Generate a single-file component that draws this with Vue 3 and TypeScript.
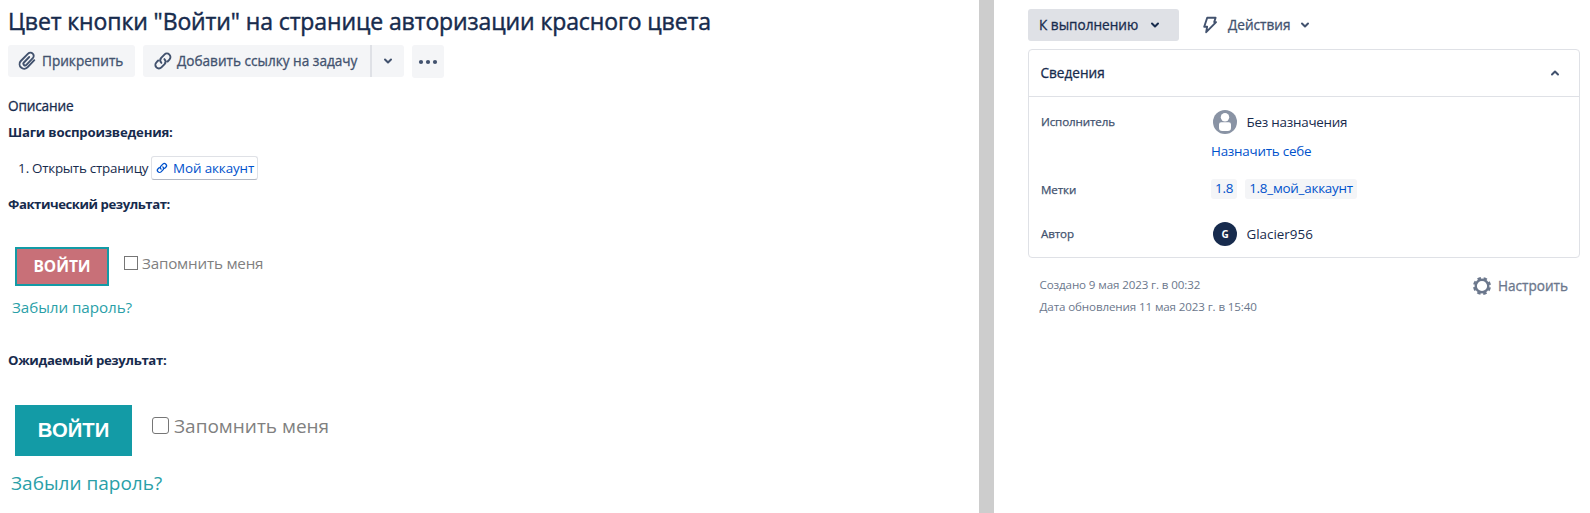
<script setup lang="ts">
interface Shot {
  kind: string
  button: string
  remember: string
  forgot: string
}

const tags: string[] = ['1.8', '1.8_мой_аккаунт']
const actual: Shot = { kind: 'actual', button: 'ВОЙТИ', remember: 'Запомнить меня', forgot: 'Забыли пароль?' }
const expected: Shot = { ...actual, kind: 'expected' }
</script>

<template>
  <div class="page">
    <main class="issue">
      <h1><span class="t title">Цвет кнопки "Войти" на странице авторизации красного цвета</span></h1>
      <div class="toolbar">
        <button class="btn attach">
          <svg width="20" height="20" viewBox="0 0 20 20" fill="none" stroke="currentColor" stroke-width="1.9" stroke-linecap="round" stroke-linejoin="round"><path d="M17.3 9.2l-6.6 7a4.6 4.6 0 0 1-6.9-6.2l7.3-7.3a3.2 3.2 0 0 1 4.7 4.5l-6.4 6.7a1.7 1.7 0 0 1-2.5-2.4l5.3-5.5" /></svg>
          <span class="t">Прикрепить</span>
        </button>
        <div class="split">
          <button class="btn link">
            <svg width="20" height="20" viewBox="0 0 20 20" fill="none" stroke="currentColor" stroke-width="1.9" stroke-linecap="round"><path d="M8.4 11.9a3.7 3.7 0 0 1-.2-5l3.2-3.3a3.5 3.5 0 0 1 5 5l-1.8 1.9M11.4 8.1a3.7 3.7 0 0 1 .2 5l-3.2 3.3a3.5 3.5 0 0 1-5-5l1.8-1.9" /></svg>
            <span class="t">Добавить ссылку на задачу</span>
          </button>
          <button class="btn caret"><svg width="10" height="8" viewBox="0 0 10 8" fill="none" stroke="currentColor" stroke-width="2" stroke-linecap="round" stroke-linejoin="round"><path d="M2 2.5l3 3 3-3" /></svg></button>
        </div>
        <button class="btn more"><svg width="20" height="6" viewBox="0 0 20 6" fill="currentColor"><circle cx="3" cy="3" r="2.1" /><circle cx="10" cy="3" r="2.1" /><circle cx="17" cy="3" r="2.1" /></svg></button>
      </div>

      <p class="row desc"><span class="t">Описание</span></p>
      <p class="row steps"><b class="t heading-steps">Шаги воспроизведения:</b></p>
      <div class="step">
        <span class="num">1.</span>
        <span class="t open">Открыть страницу</span>
        <a class="chip">
          <svg width="12" height="12" viewBox="0 0 20 20" fill="none" stroke="currentColor" stroke-width="2.2" stroke-linecap="round"><path d="M8.4 11.9a3.7 3.7 0 0 1-.2-5l3.2-3.3a3.5 3.5 0 0 1 5 5l-1.8 1.9M11.4 8.1a3.7 3.7 0 0 1 .2 5l-3.2 3.3a3.5 3.5 0 0 1-5-5l1.8-1.9" /></svg>
          <span class="t">Мой аккаунт</span>
        </a>
      </div>
      <p class="row"><b class="t heading-actual">Фактический результат:</b></p>

      <section v-for="shot in [actual, expected]" :key="shot.kind" :class="shot.kind">
        <p v-if="shot.kind === 'expected'" class="row"><b class="t heading-expected">Ожидаемый результат:</b></p>
        <div class="login">
          <div class="enter"><span class="t enter-text">{{ shot.button }}</span></div>
          <i class="box"></i>
          <span class="t remember">{{ shot.remember }}</span>
        </div>
        <div class="forgot"><span class="t">{{ shot.forgot }}</span></div>
      </section>
    </main>

    <div class="divider"></div>

    <aside class="side">
      <div class="status">
        <button class="state">
          <span class="t">К выполнению</span>
          <svg width="10" height="8" viewBox="0 0 10 8" fill="none" stroke="currentColor" stroke-width="2" stroke-linecap="round" stroke-linejoin="round"><path d="M2 2.5l3 3 3-3" /></svg>
        </button>
        <div class="actions">
          <svg class="bolt" width="16" height="18" viewBox="0 0 16 18" fill="none" stroke="currentColor" stroke-width="1.9" stroke-linejoin="round"><path d="M5.2 1.8h8.4l-1.4 4.3h1.9L4.2 16.2l.9-5.4H2.2z" /></svg>
          <span class="t act">Действия</span>
          <svg width="10" height="8" viewBox="0 0 10 8" fill="none" stroke="currentColor" stroke-width="2" stroke-linecap="round" stroke-linejoin="round"><path d="M2 2.5l3 3 3-3" /></svg>
        </div>
      </div>

      <div class="card">
        <header>
          <span class="t">Сведения</span>
          <svg width="10" height="8" viewBox="0 0 10 8" fill="none" stroke="#42526e" stroke-width="2" stroke-linecap="round" stroke-linejoin="round"><path d="M2 5.5l3-3 3 3" /></svg>
        </header>
        <dl>
          <dt><span class="t">Исполнитель</span></dt>
          <dd class="person">
            <svg width="24" height="24" viewBox="0 0 24 24"><circle cx="12" cy="12" r="12" fill="#8993a4" /><circle cx="12" cy="7.2" r="4.2" fill="#fff" /><path d="M6 14.4a2.2 2.2 0 0 1 2.2-2.2h7.6a2.2 2.2 0 0 1 2.2 2.2v3.4a3.2 3.2 0 0 1-3.2 3.2H9.2a3.2 3.2 0 0 1-3.2-3.2z" fill="#fff" /></svg>
            <span class="t name">Без назначения</span>
          </dd>
          <dd class="self"><a class="t name">Назначить себе</a></dd>
          <dt class="labels"><span class="t">Метки</span></dt>
          <dd class="tags"><a v-for="tag in tags" :key="tag" class="tag"><span class="t">{{ tag }}</span></a></dd>
          <dt><span class="t">Автор</span></dt>
          <dd class="person"><span class="avatar">G</span><span class="t">Glacier956</span></dd>
        </dl>
      </div>

      <footer>
        <div class="dates">
          <p><span class="t">Создано 9 мая 2023 г. в 00:32</span></p>
          <p><span class="t">Дата обновления 11 мая 2023 г. в 15:40</span></p>
        </div>
        <div class="config">
          <svg width="20" height="20" viewBox="0 0 20 20" fill="none" stroke="currentColor"><circle cx="10" cy="10" r="6.3" stroke-width="2.4" /><circle cx="10" cy="10" r="8" stroke-width="2" stroke-dasharray="3.5 2.783" stroke-dashoffset="-1.4" /></svg>
          <span class="t">Настроить</span>
        </div>
      </footer>
    </aside>
  </div>
</template>

<style>
body { background: #fff; }
</style>

<style scoped>
* { box-sizing: border-box; }
.page { display: flex; width: 1590px; height: 513px; overflow: hidden; font: 13.4px/20px "Segoe UI", "Open Sans", "Noto Sans", sans-serif; color: #172b4d; background: #fff; }
h1, p, dl, dd, dt { margin: 0; font-weight: 400; }
button { border: 0; padding: 0; font: inherit; color: inherit; }
svg { flex: none; display: block; }
.t { white-space: nowrap; display: inline-block; }
.issue { width: 979px; padding-left: 8px; flex: none; }
.divider { width: 15px; background: #cdcdcd; flex: none; }
h1 { height: 45px; padding-top: 4px; font-size: 23px; line-height: 34px; letter-spacing: -0.11px; -webkit-text-stroke: 0.45px currentColor; }
.toolbar { display: flex; gap: 8px; height: 33px; color: #42526e; }
.btn { display: flex; align-items: center; height: 32px; background: #f4f5f7; border-radius: 3px; }
.btn .t, .desc, .state .t, .act, .card header .t, .config .t { font-size: 13.6px; -webkit-text-stroke: 0.3px currentColor; }
.desc { letter-spacing: -0.15px; }
dt .t { -webkit-text-stroke: 0.25px currentColor; }
.attach { width: 127px; padding-left: 9px; gap: 5px; }
.split { display: flex; }
.link { width: 227px; padding-left: 10px; gap: 4px; border-radius: 3px 0 0 3px; }
.caret { width: 34px; border-left: 2px solid #dfe1e6; border-radius: 0 3px 3px 0; justify-content: center; }
.more { width: 32px; height: 33px; justify-content: center; }
.row { height: 20px; }
.desc { margin-top: 18px; }
.steps { margin-top: 6px; }
b { font-size: 13.2px; font-weight: 700; }
.heading-steps { letter-spacing: -0.21px; }
.heading-actual { letter-spacing: -0.46px; }
.heading-expected { letter-spacing: -0.34px; }
.step { display: flex; align-items: center; height: 24px; margin: 14px 0; padding-left: 10px; }
.num { width: 14px; }
.open { width: 119px; letter-spacing: -0.25px; }
.chip { display: flex; align-items: center; gap: 5px; height: 24px; width: 107px; padding-left: 4px; border: 1px solid #dfe1e6; border-bottom-color: #b3b8c2; border-radius: 3px; color: #0052cc; letter-spacing: -0.1px; }
.login { display: flex; color: #808080; }
.enter { display: flex; align-items: center; justify-content: center; color: #fff; font-weight: 700; }
.box { border: 1px solid #767676; flex: none; }
.forgot { color: #2a9fa8; }
.actual { height: 134px; padding: 33px 0 0 7px; font-size: 15.2px; }
.actual .enter { width: 94px; height: 39px; padding-bottom: 1px; background: #c87078; border: 2px solid #139ba6; font-size: 15.5px; }
.actual .box { width: 14px; height: 14px; margin: 9px 4px 0 15px; }
.actual .remember { margin-top: 6px; letter-spacing: -0.19px; }
.actual .forgot { padding-top: 11px; margin-left: -3px; letter-spacing: -0.05px; }
.expected { font-size: 19px; }
.expected .login { padding: 37px 0 0 7px; }
.expected .enter { width: 117px; height: 51px; padding-bottom: 2px; background: #139ba6; font-family: "Liberation Sans", Arial, sans-serif; font-size: 20.3px; }
.expected .box { width: 17px; height: 17px; margin: 12px 5px 0 20px; border-radius: 3px; }
.expected .remember { margin-top: 11px; }
.expected .forgot { padding-top: 17px; margin-left: 3px; }
.side { width: 596px; padding: 9px 10px 0 34px; }
.status { display: flex; height: 40px; }
.state { display: flex; align-items: center; justify-content: space-between; width: 151px; height: 32px; padding: 0 19px 0 11px; background: #dfe1e6; border-radius: 3px; }
.actions { display: flex; align-items: center; height: 32px; padding-left: 23px; color: #42526e; }
.bolt { margin-right: 10px; }
.act { margin-right: 10px; }
.card { height: 209px; border: 1px solid #dfe1e6; border-radius: 4px; }
.card header { display: flex; justify-content: space-between; align-items: center; height: 47px; padding: 0 19px 0 11.5px; border-bottom: 1px solid #dfe1e6; }
dl { display: grid; grid-template-columns: 170px 1fr; grid-template-rows: 50px 32px 38px 34px; padding-left: 12px; }
dt { grid-column: 1; font-size: 11.6px; color: #42526e; align-self: center; letter-spacing: -0.12px; }
dd { grid-column: 2; align-self: center; }
.name { letter-spacing: -0.23px; }
.person { display: flex; align-items: center; gap: 9.5px; padding-left: 2px; }
.self, .tags { color: #0052cc; }
.self { align-self: start; margin-top: -6px; }
.labels { align-self: start; margin-top: 1px; }
.tags { display: flex; gap: 8px; align-self: start; letter-spacing: -0.23px; }
.tag { height: 20px; padding: 0 4px; background: #f4f5f7; border-radius: 3px; line-height: 18px; }
.avatar { display: flex; justify-content: center; width: 24px; height: 24px; border-radius: 50%; background: #172b4d; color: #fff; font: 700 10px/24px "Open Sans", sans-serif; }
footer { display: flex; justify-content: space-between; color: #6b778c; padding: 16px 12px 0 11.5px; }
.dates { font-size: 11.6px; line-height: 22px; letter-spacing: -0.12px; }
.config { display: flex; align-items: center; gap: 6px; height: 24px; }
</style>
